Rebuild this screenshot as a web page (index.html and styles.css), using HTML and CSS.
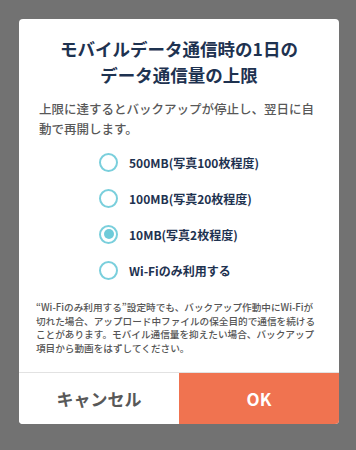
FILE: index.html
```html
<!DOCTYPE html>
<html lang="ja">
<head>
    <meta charset="UTF-8">
    <meta name="viewport" content="width=device-width, initial-scale=1.0">
    <title>データ通信量の上限</title>
    <link rel="stylesheet" href="styles.css">
</head>
<body>
    <div class="dialog">
        <div class="dialog-body">
            <h2 class="title">モバイルデータ通信時の1日の<br>データ通信量の上限</h2>
            <p class="desc">上限に達するとバックアップが停止し、翌日に自動で再開します。</p>

            <div class="options">
                <label class="option">
                    <span class="radio"></span>
                    <span class="option-text">500MB(写真100枚程度)</span>
                </label>
                <label class="option">
                    <span class="radio"></span>
                    <span class="option-text">100MB(写真20枚程度)</span>
                </label>
                <label class="option">
                    <span class="radio checked"></span>
                    <span class="option-text">10MB(写真2枚程度)</span>
                </label>
                <label class="option">
                    <span class="radio"></span>
                    <span class="option-text">Wi-Fiのみ利用する</span>
                </label>
            </div>

            <p class="note"><span class="q">“</span>Wi-Fiのみ利用する<span class="q">”</span>設定時でも、バックアップ作動中にWi-Fiが<br>切れた場合、アップロード中ファイルの保全目的で通信を続ける<br>ことがあります。モバイル通信量を抑えたい場合、バックアップ<br>項目から動画をはずしてください。</p>
        </div>

        <div class="actions">
            <button class="btn cancel">キャンセル</button>
            <button class="btn ok">OK</button>
        </div>
    </div>
</body>
</html>
```

FILE: styles.css
```css
body {
    margin: 0;
    padding: 19px;
    background-color: #727272;
    font-family: 'Noto Sans CJK JP', 'Noto Sans', sans-serif;
}

.dialog {
    width: 320px;
    background-color: #fff;
    border-radius: 4px;
    overflow: hidden;
}

.dialog-body {
    padding: 17px 20px 0;
}

.title {
    margin: 0;
    font-size: 17.5px;
    line-height: 26px;
    font-weight: bold;
    text-align: center;
    color: #1e3250;
}

.desc {
    margin: 11px 0 0;
    font-size: 12.5px;
    line-height: 20px;
    font-weight: 500;
    color: #585858;
}

.options {
    margin-top: 5px;
    display: flex;
    flex-direction: column;
    align-items: flex-start;
    width: max-content;
    margin-left: auto;
    margin-right: auto;
}

.option {
    display: flex;
    align-items: center;
    height: 36px;
}

.radio {
    box-sizing: border-box;
    width: 19px;
    height: 19px;
    border: 2px solid #7acfdc;
    border-radius: 50%;
    display: flex;
    align-items: center;
    justify-content: center;
    margin-right: 11px;
}

.radio.checked::after {
    content: "";
    width: 10px;
    height: 10px;
    border-radius: 50%;
    background-color: #6ecbd9;
}

.option-text {
    font-size: 12px;
    font-weight: bold;
    color: #1e3250;
}

.note {
    margin: 13px -3px 17px;
    font-size: 9.65px;
    line-height: 13.6px;
    font-weight: 500;
    color: #555;
    white-space: nowrap;
}

.note .q {
    font-feature-settings: "pwid";
}

.actions {
    display: flex;
    border-top: 1px solid #e2e2e2;
}

.btn {
    flex: 1;
    height: 51px;
    border: none;
    font-family: inherit;
    font-size: 17px;
    font-weight: bold;
    cursor: pointer;
}

.btn.cancel {
    background-color: #fff;
    color: #585858;
}

.btn.ok {
    background-color: #f07350;
    color: #fff;
}
```
